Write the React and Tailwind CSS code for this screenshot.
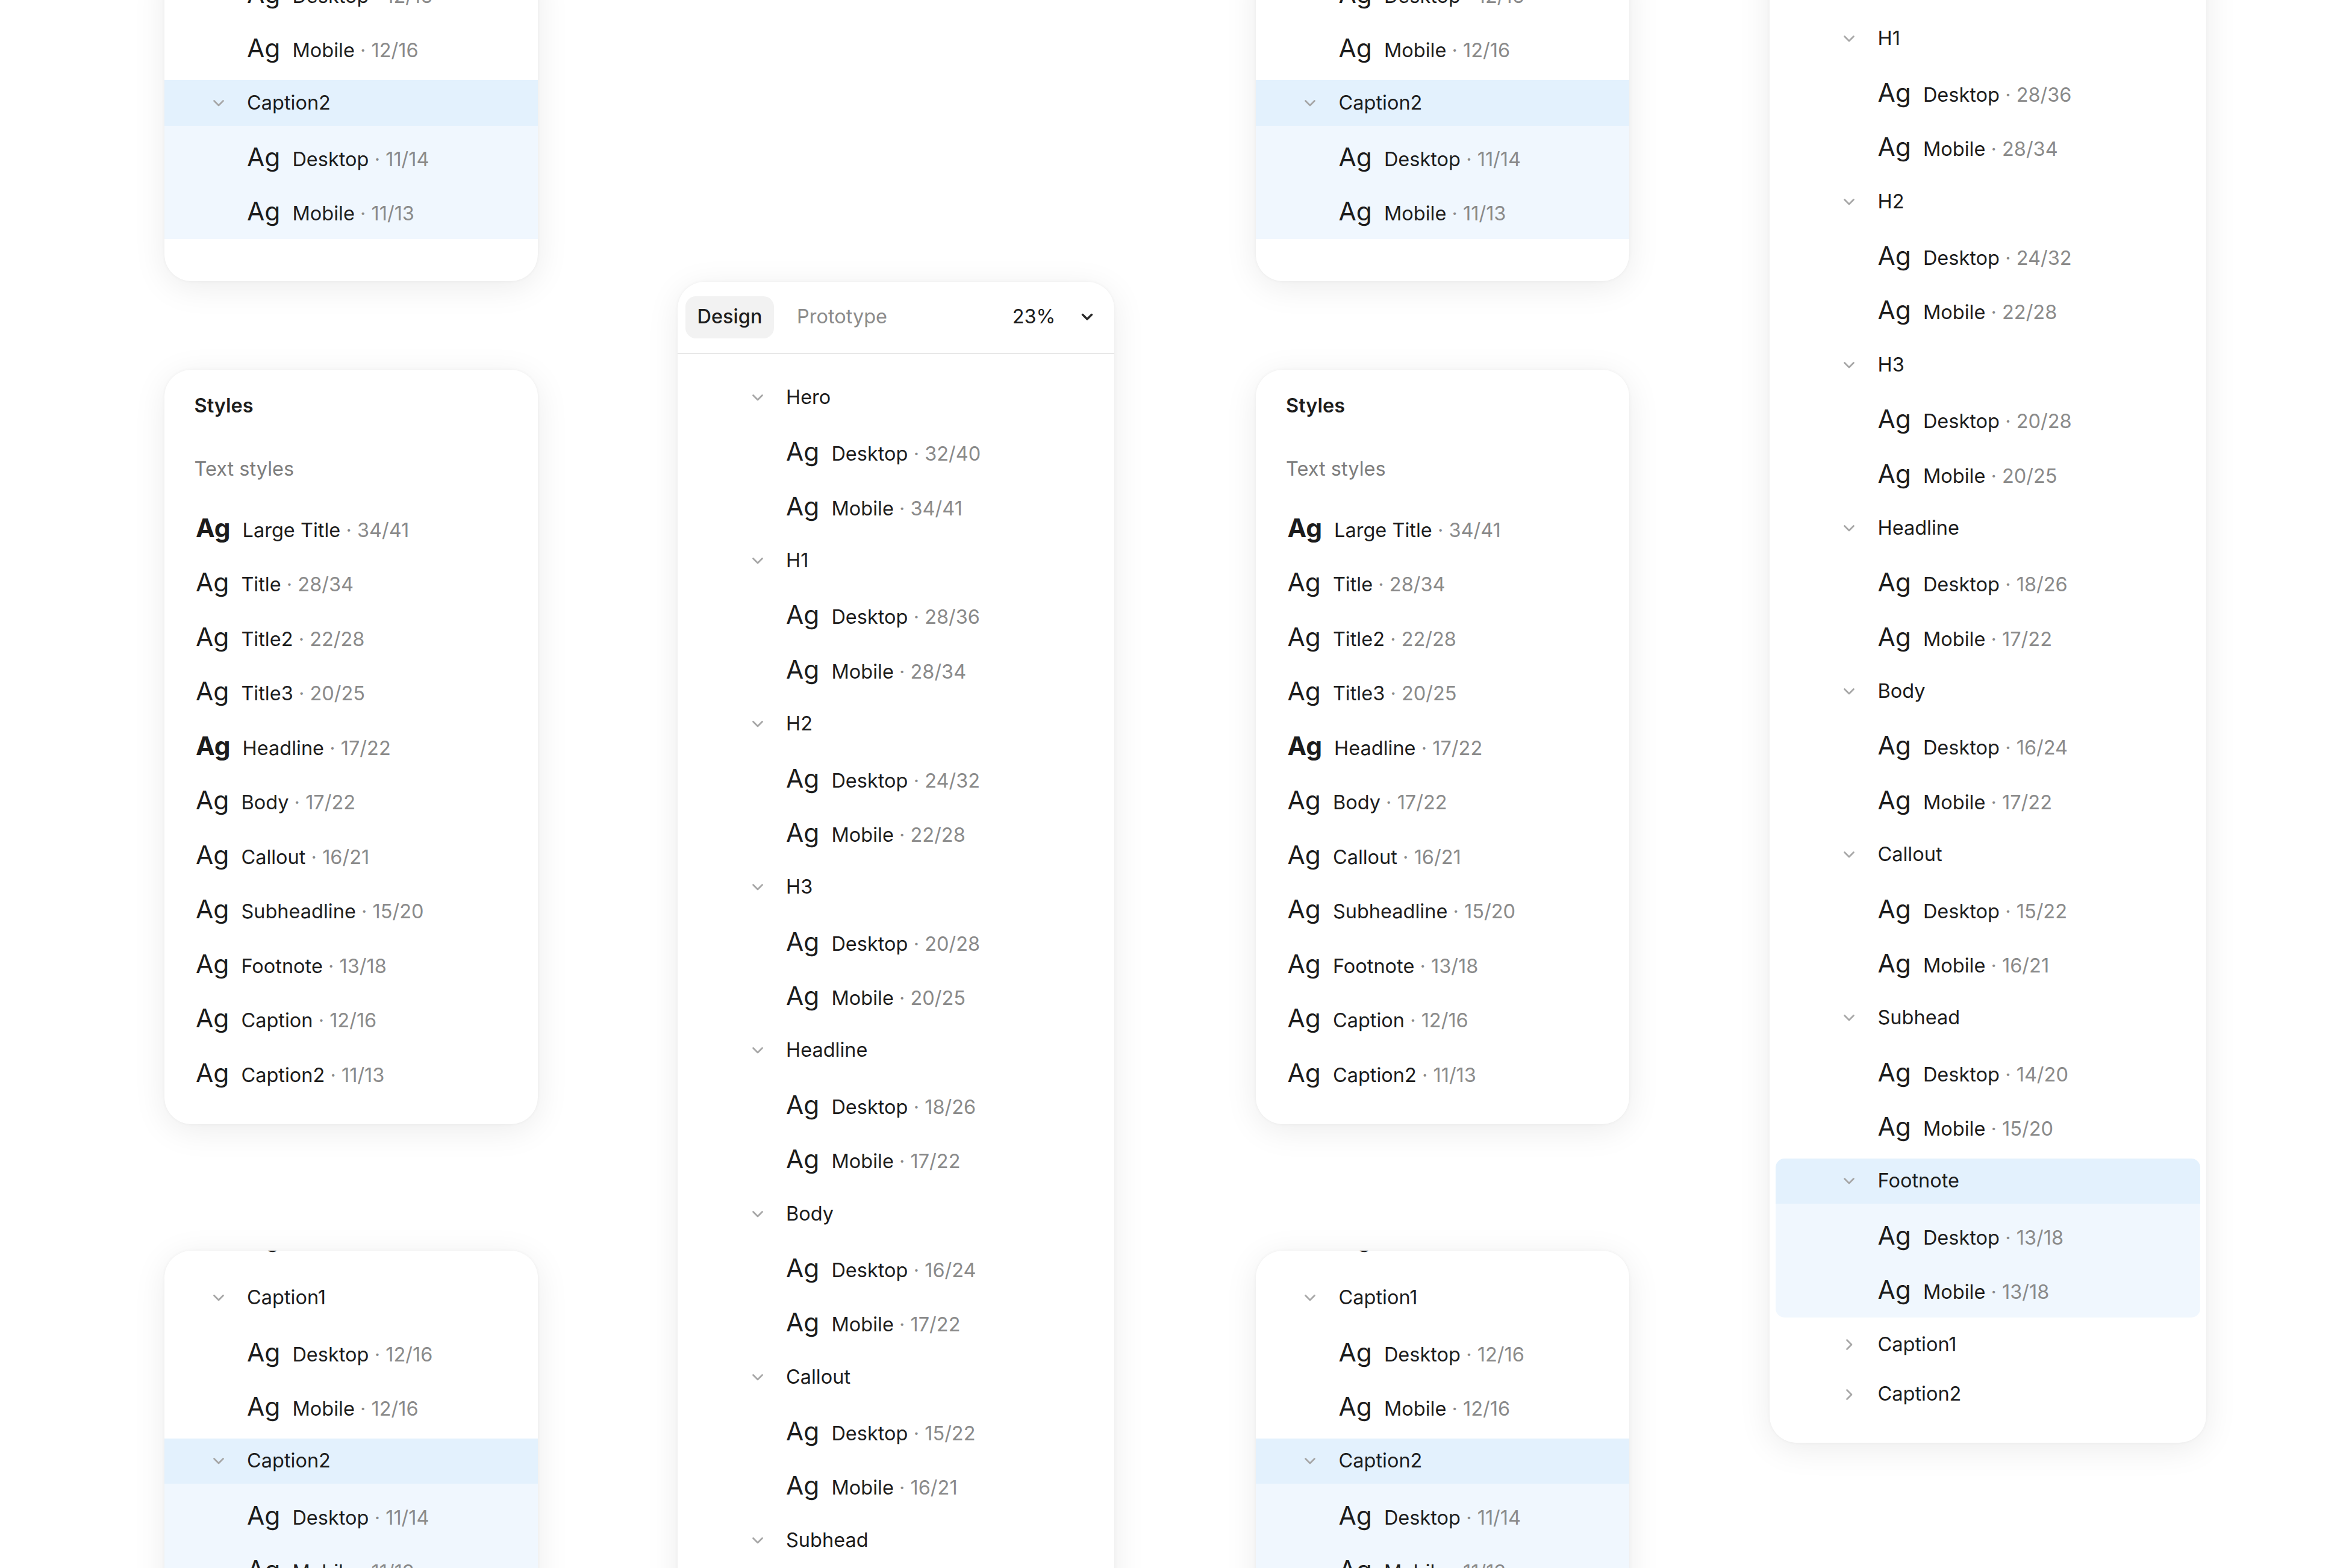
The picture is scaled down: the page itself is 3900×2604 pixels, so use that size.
import React from "react";

const DOWN = (
  <svg width="8" height="5" viewBox="0 0 8 5" className="block">
    <path d="M1 1L4 4L7 1" stroke="#a6a6a6" strokeWidth="1.1" fill="none" strokeLinecap="round" strokeLinejoin="round" />
  </svg>
);
const RIGHT = (
  <svg width="5" height="8" viewBox="0 0 5 8" className="block">
    <path d="M1 1L4 4L1 7" stroke="#a6a6a6" strokeWidth="1.1" fill="none" strokeLinecap="round" strokeLinejoin="round" />
  </svg>
);

const DATA = [
  ["Hero", "32/40", "34/41"],
  ["H1", "28/36", "28/34"],
  ["H2", "24/32", "22/28"],
  ["H3", "20/28", "20/25"],
  ["Headline", "18/26", "17/22"],
  ["Body", "16/24", "17/22"],
  ["Callout", "15/22", "16/21"],
  ["Subhead", "14/20", "15/20"],
  ["Footnote", "13/18", "13/18"],
  ["Caption1", "12/16", "12/16"],
  ["Caption2", "11/14", "11/13"],
];

function Child({ label, size, pl }) {
  return (
    <div className={"h-[36.15px] flex items-center " + pl}>
      <div className="flex items-baseline gap-[8px]">
        <span className="text-[17px] leading-none text-[#1c1c1c]">Ag</span>
        <span className="text-[13px] leading-none text-[#1c1c1c]">
          {label}
          <span className="text-[#8a8a8a]"> · {size}</span>
        </span>
      </div>
    </div>
  );
}

function Group({ name, d, m, open = true, selected = false, variant = "wide" }) {
  const inset = variant === "inset";
  const headPl = variant === "narrow" ? "pl-[32px]" : inset ? "pl-[45px]" : "pl-[49px]";
  const childPl = variant === "narrow" ? "pl-[55px]" : inset ? "pl-[68px]" : "pl-[72px]";
  const wrap = inset ? "mt-[3px] mx-[4px] rounded-[6px] overflow-hidden" : "mt-[3px]";
  return (
    <div className={wrap}>
      <div className={"h-[30.15px] flex items-center " + headPl + (selected ? " bg-[#e3f1fd]" : "")}>
        <span className="w-[8px] h-[8px] flex items-center justify-center mr-[15px]">{open ? DOWN : RIGHT}</span>
        <span className="text-[13px] leading-none text-[#1c1c1c]">{name}</span>
      </div>
      {open && (
        <div className={"pt-[3px]" + (selected ? " bg-[#f0f7fe]" : "")}>
          <Child label="Desktop" size={d} pl={childPl} />
          <Child label="Mobile" size={m} pl={childPl} />
        </div>
      )}
    </div>
  );
}

const card = "bg-white overflow-hidden shadow-[0_4px_22px_rgba(0,0,0,0.08),0_0_2px_rgba(0,0,0,0.05)]";

function CardA() {
  return (
    <div className={card + " mt-[-30px] rounded-[18px] pt-[8px] pb-[28px]"}>
      <Child label="Desktop" size="12/16" pl="pl-[55px]" />
      <Child label="Mobile" size="12/16" pl="pl-[55px]" />
      <Group name="Caption2" d="11/14" m="11/13" selected variant="narrow" />
    </div>
  );
}

const STYLES = [
  ["Large Title", "34/41", true],
  ["Title", "28/34", false],
  ["Title2", "22/28", false],
  ["Title3", "20/25", false],
  ["Headline", "17/22", true],
  ["Body", "17/22", false],
  ["Callout", "16/21", false],
  ["Subheadline", "15/20", false],
  ["Footnote", "13/18", false],
  ["Caption", "12/16", false],
  ["Caption2", "11/13", false],
];

function StylesCard() {
  return (
    <div className={card + " mt-[59px] rounded-[18px] pb-[16px]"}>
      <div className="h-[48px] flex items-center px-[20px]">
        <span className="text-[13px] font-semibold text-[#1c1c1c]">Styles</span>
      </div>
      <div className="h-[36px] flex items-center px-[20px]">
        <span className="text-[13px] text-[#7d7d7d]">Text styles</span>
      </div>
      <div className="pt-[3px]">
        {STYLES.map(([n, s, b]) => (
          <div key={n} className="h-[36.2px] flex items-center pl-[21px]">
            <div className="flex items-baseline gap-[8px]">
              <span className={"text-[17px] leading-none text-[#1c1c1c]" + (b ? " font-bold" : "")}>Ag</span>
              <span className="text-[13px] leading-none text-[#1c1c1c]">
                {n}
                <span className="text-[#8a8a8a]"> · {s}</span>
              </span>
            </div>
          </div>
        ))}
      </div>
    </div>
  );
}

function CardC() {
  return (
    <div className={card + " mt-[84px] rounded-[18px] h-[300px]"}>
      <div className="mt-[-27px]">
        <Child label="Mobile" size="13/18" pl="pl-[55px]" />
        <div className="h-[4px]" />
        <Group name="Caption1" d="12/16" m="12/16" variant="narrow" />
        <Group name="Caption2" d="11/14" m="11/13" selected variant="narrow" />
      </div>
    </div>
  );
}

function SideColumn() {
  return (
    <div className="w-[248px] flex flex-col shrink-0">
      <CardA />
      <StylesCard />
      <CardC />
    </div>
  );
}

function MiddlePanel() {
  return (
    <div className="w-[290px] shrink-0 mt-[187px]">
      <div className={card + " rounded-[18px] h-[900px]"}>
        <div className="h-[48px] flex items-center pl-[5px] pr-[14px] border-b border-[#e8e8e8]">
          <div className="h-[28px] px-[8px] flex items-center rounded-[7px] bg-[#f2f2f2]">
            <span className="text-[13px] font-medium text-[#1c1c1c]">Design</span>
          </div>
          <div className="h-[28px] px-[8px] ml-[7px] flex items-center">
            <span className="text-[13px] text-[#8b8b8b]">Prototype</span>
          </div>
          <div className="ml-auto flex items-center">
            <span className="text-[13px] text-[#1c1c1c]">23%</span>
            <span className="ml-[17px]">
              <svg width="8" height="5" viewBox="0 0 8 5" className="block">
                <path d="M1 1L4 4L7 1" stroke="#2a2a2a" strokeWidth="1.4" fill="none" strokeLinecap="round" strokeLinejoin="round" />
              </svg>
            </span>
          </div>
        </div>
        <div className="pt-[11px]">
          {DATA.slice(0, 9).map(([n, d, m]) => (
            <Group key={n} name={n} d={d} m={m} />
          ))}
        </div>
      </div>
    </div>
  );
}

function RightPanel() {
  return (
    <div className="w-[290px] shrink-0 mt-[-112px]">
      <div className={card + " rounded-[18px] pt-[11px] pb-[17px]"}>
        {DATA.slice(0, 8).map(([n, d, m]) => (
          <Group key={n} name={n} d={d} m={m} />
        ))}
        <Group name="Footnote" d="13/18" m="13/18" selected variant="inset" />
        <Group name="Caption1" d="12/16" m="12/16" open={false} />
        <Group name="Caption2" d="11/14" m="11/13" open={false} />
      </div>
    </div>
  );
}

export default function App() {
  return (
    <div className="w-[3900px] h-[2604px] overflow-hidden bg-white">
      <div className="[zoom:2.5] w-[1560px] h-[1042px] overflow-hidden font-['Inter',sans-serif] antialiased">
        <div className="flex items-start pl-[109px]">
          <SideColumn />
          <div className="w-[93px] shrink-0" />
          <MiddlePanel />
          <div className="w-[94px] shrink-0" />
          <SideColumn />
          <div className="w-[93px] shrink-0" />
          <RightPanel />
        </div>
      </div>
    </div>
  );
}
